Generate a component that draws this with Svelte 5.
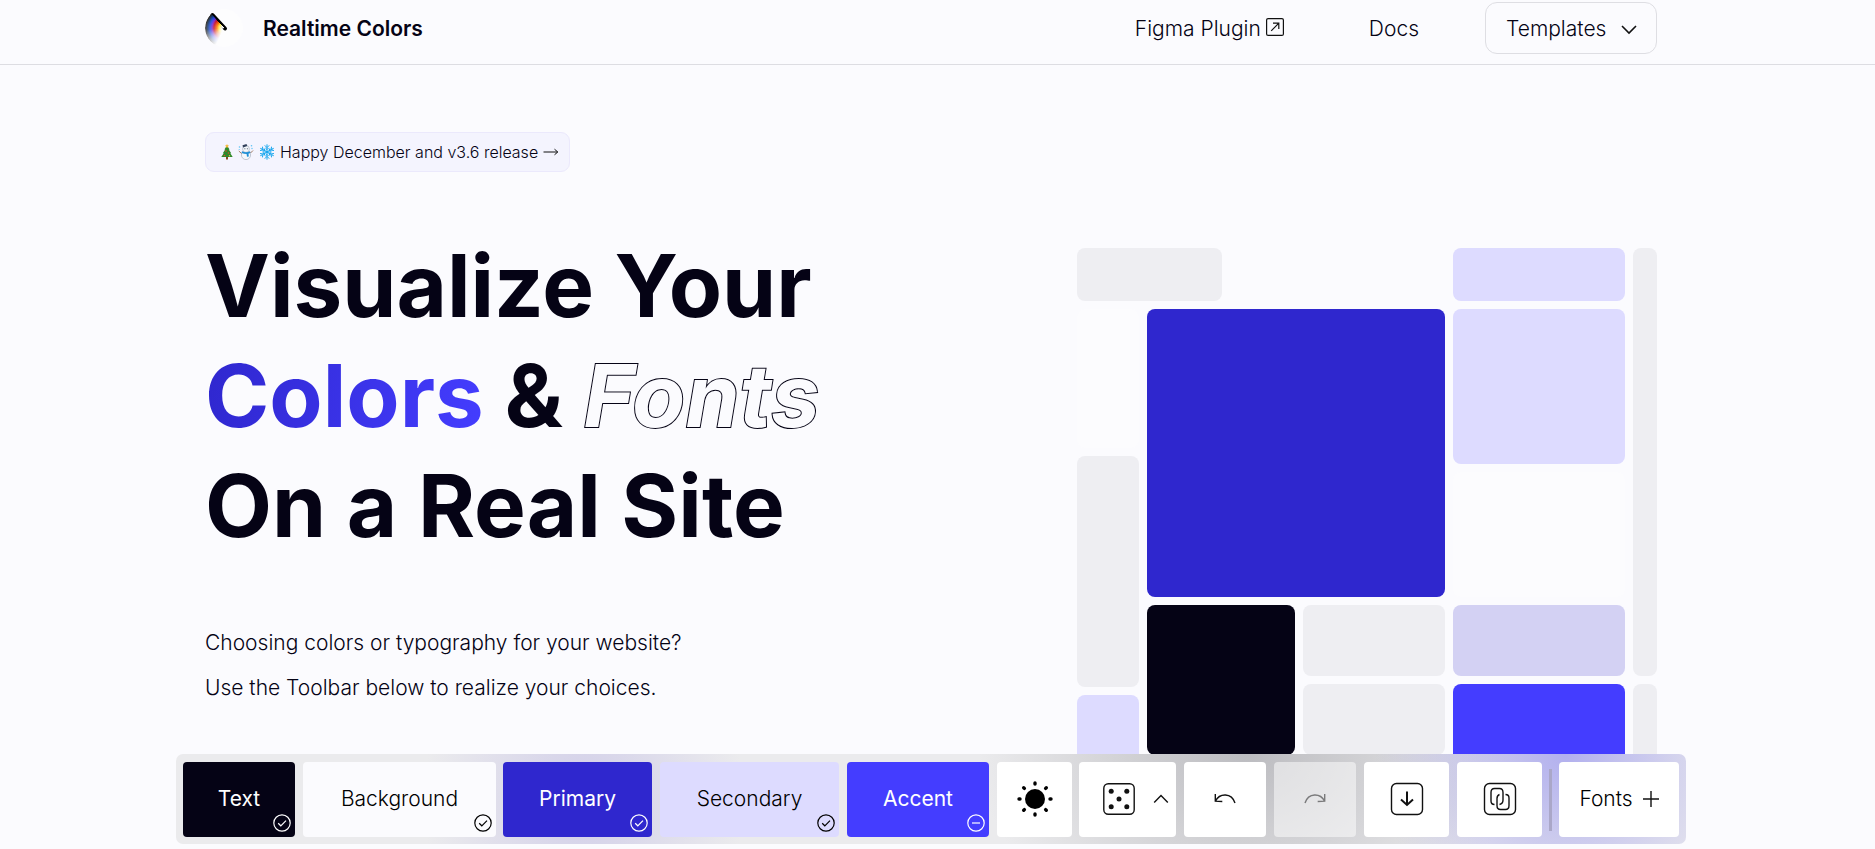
<script>
  const swatches = [
    { name: 'Text', kind: 'text', locked: true },
    { name: 'Background', kind: 'background', locked: true },
    { name: 'Primary', kind: 'primary', locked: true },
    { name: 'Secondary', kind: 'secondary', locked: true },
    { name: 'Accent', kind: 'accent', locked: false }
  ];
  const rays = [0, 45, 90, 135, 180, 225, 270, 315];
</script>

{#snippet swatch(s)}
  <button class="tool swatch {s.kind}">
    {s.name}
    <svg class="state" viewBox="0 0 18 18" width="18" height="18" aria-hidden="true">
      <circle cx="9" cy="9" r="8.2" />
      {#if s.locked}
        <path d="M5.2 9.3 7.8 11.8 13 6.6" />
      {:else}
        <path d="M5 9h8" />
      {/if}
    </svg>
  </button>
{/snippet}

<div class="page">
  <header>
    <div class="wrap bar">
      <a class="brand" href="#top">
        <span class="logo">
          <svg viewBox="0 0 38 38" width="38" height="38" aria-hidden="true">
            <path d="M7.5 6 20 19.5" />
          </svg>
        </span>
        Realtime Colors
      </a>
      <nav>
        <a class="plugin" href="#figma">
          Figma Plugin
          <svg viewBox="0 0 18 18" width="18" height="18" aria-hidden="true">
            <rect x=".6" y=".6" width="16.8" height="16.8" rx="1.5" />
            <path d="M5.2 12.8 12.6 5.4M7 5.2h5.8V11" />
          </svg>
        </a>
        <a class="docs" href="#docs">Docs</a>
        <button class="templates">
          Templates
          <svg viewBox="0 0 16 10" width="16" height="10" aria-hidden="true"><path d="m1 1 7 7 7-7" /></svg>
        </button>
      </nav>
    </div>
  </header>

  <main class="wrap hero">
    <section class="copy">
      <a class="release" href="#release">
        <svg viewBox="0 0 12 16" width="12" height="16" aria-hidden="true">
          <path fill="#8a4b20" d="M5 12h2v3.5H5z" />
          <path fill="#2f8a2b" d="m6 1.5 2.6 4H7.8l2.4 3.7h-.9L11.7 13H.3l2.4-3.8h-.9l2.4-3.7h-.8z" />
          <path fill="#f6b93b" d="m6 0 .7 1.3 1.3.2-1 1 .2 1.3L6 3.2l-1.2.6.2-1.3-1-1 1.300-.2z" />
          <circle cx="5" cy="7" r=".8" fill="#e8452c" /><circle cx="7.5" cy="9" r=".8" fill="#e8452c" />
          <circle cx="3.5" cy="11.5" r=".8" fill="#e8452c" /><circle cx="8.5" cy="11.8" r=".7" fill="#f6b93b" />
        </svg>
        <svg viewBox="0 0 16 16" width="16" height="16" aria-hidden="true">
          <circle cx="8" cy="11" r="4.6" fill="#f4f7fb" stroke="#a9b2c0" stroke-width=".7" />
          <circle cx="8" cy="5" r="3.4" fill="#f4f7fb" stroke="#a9b2c0" stroke-width=".7" />
          <path fill="#33415c" d="m4.500 1.200 4-1.200.8 2-4.300 1.400z" />
          <path fill="#1f8fd6" d="M4 7.300q4 2 8 0l.5 1.700-2 .8.300 2.700-1.800.2-.4-2.700q-2.600 0-5-1z" />
          <path fill="none" stroke="#8b5a3c" stroke-width=".8" d="M3.500 9.500.8 7M12.500 9 15 6.500" />
          <circle cx="6.900" cy="4.700" r=".5" fill="#26324a" /><circle cx="9.300" cy="4.700" r=".5" fill="#26324a" />
          <g fill="#5cc3f5"><circle cx="1.500" cy="3" r=".8" /><circle cx="13.500" cy="1.800" r=".8" /><circle cx="14" cy="4.500" r=".7" /><circle cx="1.200" cy="5.500" r=".6" /></g>
        </svg>
        <svg viewBox="0 0 16 16" width="16" height="16" aria-hidden="true">
          <g fill="none" stroke="#1aa7ee" stroke-width="1" stroke-linecap="round">
            {#each [0, 60, 120, 180, 240, 300] as angle}
              <path transform="rotate({angle} 8 8)" d="M8 8V.7M6 1.600 8 3.600l2-2M6.600 4.200 8 5.600l1.400-1.400" />
            {/each}
          </g>
        </svg>
        <span>Happy December and v3.6 release</span>
        <svg class="arrow" viewBox="0 0 16 8" width="16" height="8" aria-hidden="true"><path d="M.5 4h14M11.500 1.200 14.800 4l-3.300 2.800" /></svg>
      </a>
      <h1>
        Visualize Your<br />
        <span class="colors">Colors</span> &amp; <span class="outline">Fonts</span><br />
        On a Real Site
      </h1>
      <p>Choosing colors or typography for your website?<br />Use the Toolbar below to realize your choices.</p>
    </section>

    <div class="mosaic" aria-hidden="true">
      <div class="stack wide">
        <div class="tile gray top-left"></div>
        <div class="row fill">
          <div class="stack narrow">
            <div class="tile faint h139"></div>
            <div class="tile gray h231"></div>
            <div class="tile lilac fill"></div>
          </div>
          <div class="stack fill">
            <div class="tile blue h288"></div>
            <div class="row">
              <div class="tile ink"></div>
              <div class="stack fill">
                <div class="tile gray fill"></div>
                <div class="tile gray fill"></div>
              </div>
            </div>
          </div>
        </div>
      </div>
      <div class="stack side">
        <div class="tile lilac h53"></div>
        <div class="tile lilac h155"></div>
        <div class="tile faint h125"></div>
        <div class="tile mist h71"></div>
        <div class="tile violet fill"></div>
      </div>
      <div class="stack edge">
        <div class="tile gray h428"></div>
        <div class="tile gray fill"></div>
      </div>
    </div>
  </main>

  <div class="dock">
    <div class="toolbar" role="toolbar" aria-label="Color and font tools">
      <div class="group">
        {#each swatches.slice(0, 2) as s}{@render swatch(s)}{/each}
      </div>
      <div class="group">
        {#each swatches.slice(2) as s}{@render swatch(s)}{/each}
        <button class="tool theme" aria-label="Toggle theme">
          <svg viewBox="0 0 36 36" width="36" height="36" aria-hidden="true">
            <circle cx="18" cy="18" r="10" fill="#000" />
            {#each rays as angle}
              <path transform="rotate({angle} 18 18)" d="M18 2v1" stroke="#000" stroke-width="3.400" stroke-linecap="round" />
            {/each}
          </svg>
        </button>
      </div>
      <div class="group">
        <button class="tool dice" aria-label="Randomize">
          <svg viewBox="0 0 32 32" width="32" height="32" aria-hidden="true">
            <rect class="line" x=".8" y=".8" width="30.400" height="30.400" rx="4.500" />
            <g fill="#111">
              <circle cx="8.200" cy="8.200" r="2.500" /><circle cx="23.800" cy="8.200" r="2.500" />
              <circle cx="16" cy="16" r="2.500" />
              <circle cx="8.200" cy="23.800" r="2.500" /><circle cx="23.800" cy="23.800" r="2.500" />
            </g>
          </svg>
          <svg viewBox="0 0 16 10" width="16" height="10" aria-hidden="true"><path class="line" d="m1.200 8.500 6.800-7 6.800 7" /></svg>
        </button>
        <button class="tool step" aria-label="Undo">
          <svg viewBox="0 0 22 12" width="22" height="12" aria-hidden="true"><path class="line" d="M1.300 1v7.200l7 .3M1.500 8C5.500 0 17.500-.8 21 10" /></svg>
        </button>
        <button class="tool step redo" aria-label="Redo" disabled>
          <svg viewBox="0 0 22 12" width="22" height="12" aria-hidden="true"><path class="line" d="M20.700 1v7.200l-7 .3M20.500 8C16.500 0 4.500-.8 1 10" /></svg>
        </button>
        <button class="tool export" aria-label="Export">
          <svg viewBox="0 0 34 34" width="34" height="34" aria-hidden="true">
            <rect class="line" x="1.500" y="1.500" width="31" height="31" rx="5" />
            <path class="arrow-down" d="M17 9.500v13.500M11 17.500l6 5.500 6-5.500" />
          </svg>
        </button>
        <button class="tool export" aria-label="Copy link">
          <svg viewBox="0 0 34 34" width="34" height="34" aria-hidden="true">
            <rect class="line" x="1.500" y="1.500" width="31" height="31" rx="5" />
            <path class="line" d="M11.500 22.500C9 22.500 8 21 8 19V10.500C8 8 9.200 6.500 11.500 6.500h5c2.300 0 3.500 1.500 3.500 4V18c0 2.500-1.200 4-3.500 4.500" />
            <path class="line" d="M22.500 12.500c2.500 0 3.500 1.500 3.500 3.500v7.500c0 2.500-1.200 4-3.500 4h-5c-2.300 0-3.500-1.500-3.500-4V16.500c0-2.300 1-3.500 2.500-4" />
          </svg>
        </button>
      </div>
      <span class="divider"></span>
      <button class="tool fonts">
        Fonts
        <svg viewBox="0 0 16 16" width="16" height="16" aria-hidden="true"><path class="line" d="M8 0v16M0 8h16" /></svg>
      </button>
    </div>
  </div>
</div>

<style>
  :global(body) {
    margin: 0;
    background: #fbfbfe;
  }
  .page {
    min-height: 100vh;
    overflow: hidden;
    background: #fbfbfe;
    color: #050315;
    font-family: Inter, sans-serif;
    font-size: 21px;
    font-weight: 300;
  }
  .page * {
    box-sizing: border-box;
  }
  a {
    color: inherit;
    text-decoration: none;
  }
  button {
    font: inherit;
    color: inherit;
    cursor: pointer;
  }
  svg {
    flex: none;
  }

  header {
    padding: 2px 13px 10px 0;
    border-bottom: 1px solid #dddde2;
  }
  .wrap {
    max-width: 1452px;
    margin: 0 auto;
  }
  .bar {
    display: flex;
    align-items: center;
    justify-content: space-between;
  }
  .brand {
    display: flex;
    align-items: center;
    gap: 20px;
    font-weight: 600;
  }
  .logo {
    display: grid;
    width: 38px;
    height: 38px;
    border-radius: 50%;
    background: #fdfdfe;
  }
  .logo::before,
  .logo svg {
    grid-area: 1 / 1;
  }
  .logo::before {
    content: '';
    border-radius: 50%;
    background: radial-gradient(circle at 20px 19px, #fff 3px, #ffe94a 6px, #ff7a00 8px, #c8102a 11px, #7a2bd0 13px, #2446e0 15px, #123a7c 17px, #222 19px);
    -webkit-mask: conic-gradient(from 205deg, transparent 0deg, #0004 25deg, #000c 60deg, #000 112deg, transparent 114deg);
    mask: conic-gradient(from 205deg, transparent 0deg, #0004 25deg, #000c 60deg, #000 112deg, transparent 114deg);
  }
  .logo path {
    fill: none;
    stroke: #000;
    stroke-width: 4;
    stroke-linecap: round;
  }
  nav {
    display: flex;
    align-items: center;
  }
  .plugin {
    display: flex;
    align-items: center;
    gap: 5px;
    margin-right: 85px;
  }
  .plugin svg {
    margin-bottom: 3px;
  }
  .plugin svg,
  .templates svg {
    fill: none;
    stroke: #111;
    stroke-width: 1.2;
  }
  .docs {
    margin-right: 66px;
  }
  .templates {
    display: flex;
    align-items: center;
    justify-content: space-between;
    width: 172px;
    height: 52px;
    padding: 0 19px 0 20px;
    border: 1px solid #dedee3;
    border-radius: 12px;
    background: none;
  }
  .templates svg {
    stroke-width: 1.600;
    margin-top: 4px;
  }

  .hero {
    display: flex;
    justify-content: space-between;
    gap: 40px;
    max-width: 1465px;
    padding-right: 13px;
  }
  .copy {
    padding-top: 67px;
  }
  .release {
    display: inline-flex;
    align-items: center;
    gap: 5px;
    height: 40px;
    padding: 0 10px 0 15px;
    border: 1px solid #ebe9fc;
    border-radius: 9px;
    background: #f4f4fe;
    font-size: 16px;
  }
  .release .arrow {
    fill: none;
    stroke: #111;
  }
  h1 {
    margin: 59px 0 0;
    font-size: 87px;
    line-height: 110px;
    font-weight: 700;
    white-space: nowrap;
  }
  .colors {
    background: linear-gradient(100deg, #2f27ce, #443dff);
    -webkit-background-clip: text;
    background-clip: text;
    color: transparent;
  }
  .outline {
    font-style: italic;
    color: #fbfbfe;
    -webkit-text-stroke: 2px #050315;
    paint-order: stroke fill;
  }
  p {
    margin: 59px 0 0;
    line-height: 45px;
  }

  .mosaic {
    display: flex;
    gap: 8px;
    width: 580px;
    height: 552px;
    margin-top: 183px;
  }
  .stack {
    display: flex;
    flex-direction: column;
    gap: 8px;
  }
  .row {
    display: flex;
    gap: 8px;
  }
  .fill {
    flex: 1;
  }
  .wide {
    flex: 1;
  }
  .narrow {
    width: 62px;
  }
  .side {
    width: 172px;
  }
  .edge {
    width: 24px;
  }
  .tile {
    border-radius: 8px;
  }
  .gray { background: #eeeef2; }
  .lilac { background: #dddbff; }
  .blue { background: #2f27ce; }
  .mist { background: #d3d1f3; }
  .violet { background: #443dff; }
  .faint { background: #fcfcfe; }
  .ink {
    width: 148px;
    height: 150px;
    background: #050315;
  }
  .top-left {
    width: 145px;
    height: 53px;
  }
  .h53 { height: 53px; }
  .h71 { height: 71px; }
  .h125 { height: 125px; }
  .h139 { height: 139px; }
  .h155 { height: 155px; }
  .h231 { height: 231px; }
  .h288 { height: 288px; }
  .h428 { height: 428px; }

  .dock {
    position: fixed;
    left: 0;
    right: 13px;
    bottom: 5px;
    display: flex;
    justify-content: center;
  }
  .toolbar {
    display: flex;
    align-items: center;
    gap: 7px;
    padding: 8px 7px 7px;
    border-radius: 7px;
    background:
      radial-gradient(ellipse 190px 190px at 92% 0, #b2b0ee, #b2b0ee00),
      radial-gradient(ellipse 270px 200px at 71% 0, #bcbcc0, #bcbcc000),
      radial-gradient(ellipse 160px 200px at 27% 50%, #d2cfe9, #d2cfe900),
      #ebebed;
  }
  .group {
    display: flex;
    gap: 8px;
  }
  .tool {
    display: flex;
    align-items: center;
    justify-content: center;
    height: 75px;
    padding: 0 0 2px;
    border: 0;
    border-radius: 4px;
    background: #fff;
    color: #000;
  }
  .swatch {
    position: relative;
  }
  .state {
    position: absolute;
    right: 4px;
    bottom: 5px;
    fill: none;
    stroke: currentColor;
    stroke-width: 1.200;
  }
  .swatch.text { width: 112px; background: #050315; color: #fff; font-weight: 400; }
  .swatch.background { width: 193px; background: #fbfbfe; }
  .swatch.primary { width: 149px; background: #2f27ce; color: #fff; font-weight: 400; }
  .swatch.secondary { width: 179px; background: #dddbff; }
  .swatch.accent { width: 142px; background: #443dff; color: #fff; font-weight: 400; }
  .theme { width: 75px; }
  .dice {
    width: 97px;
    gap: 18px;
    padding-left: 16px;
  }
  .step { width: 82px; }
  .redo { background: #ffffff80; }
  .redo svg { opacity: .5; }
  .export { width: 85px; }
  .line {
    fill: none;
    stroke: #111;
    stroke-width: 1.400;
  }
  .arrow-down {
    fill: none;
    stroke: #111;
    stroke-width: 2;
  }
  .divider {
    width: 3px;
    height: 62px;
    background: #aaa7c8;
  }
  .fonts {
    width: 120px;
    gap: 10px;
  }
</style>
